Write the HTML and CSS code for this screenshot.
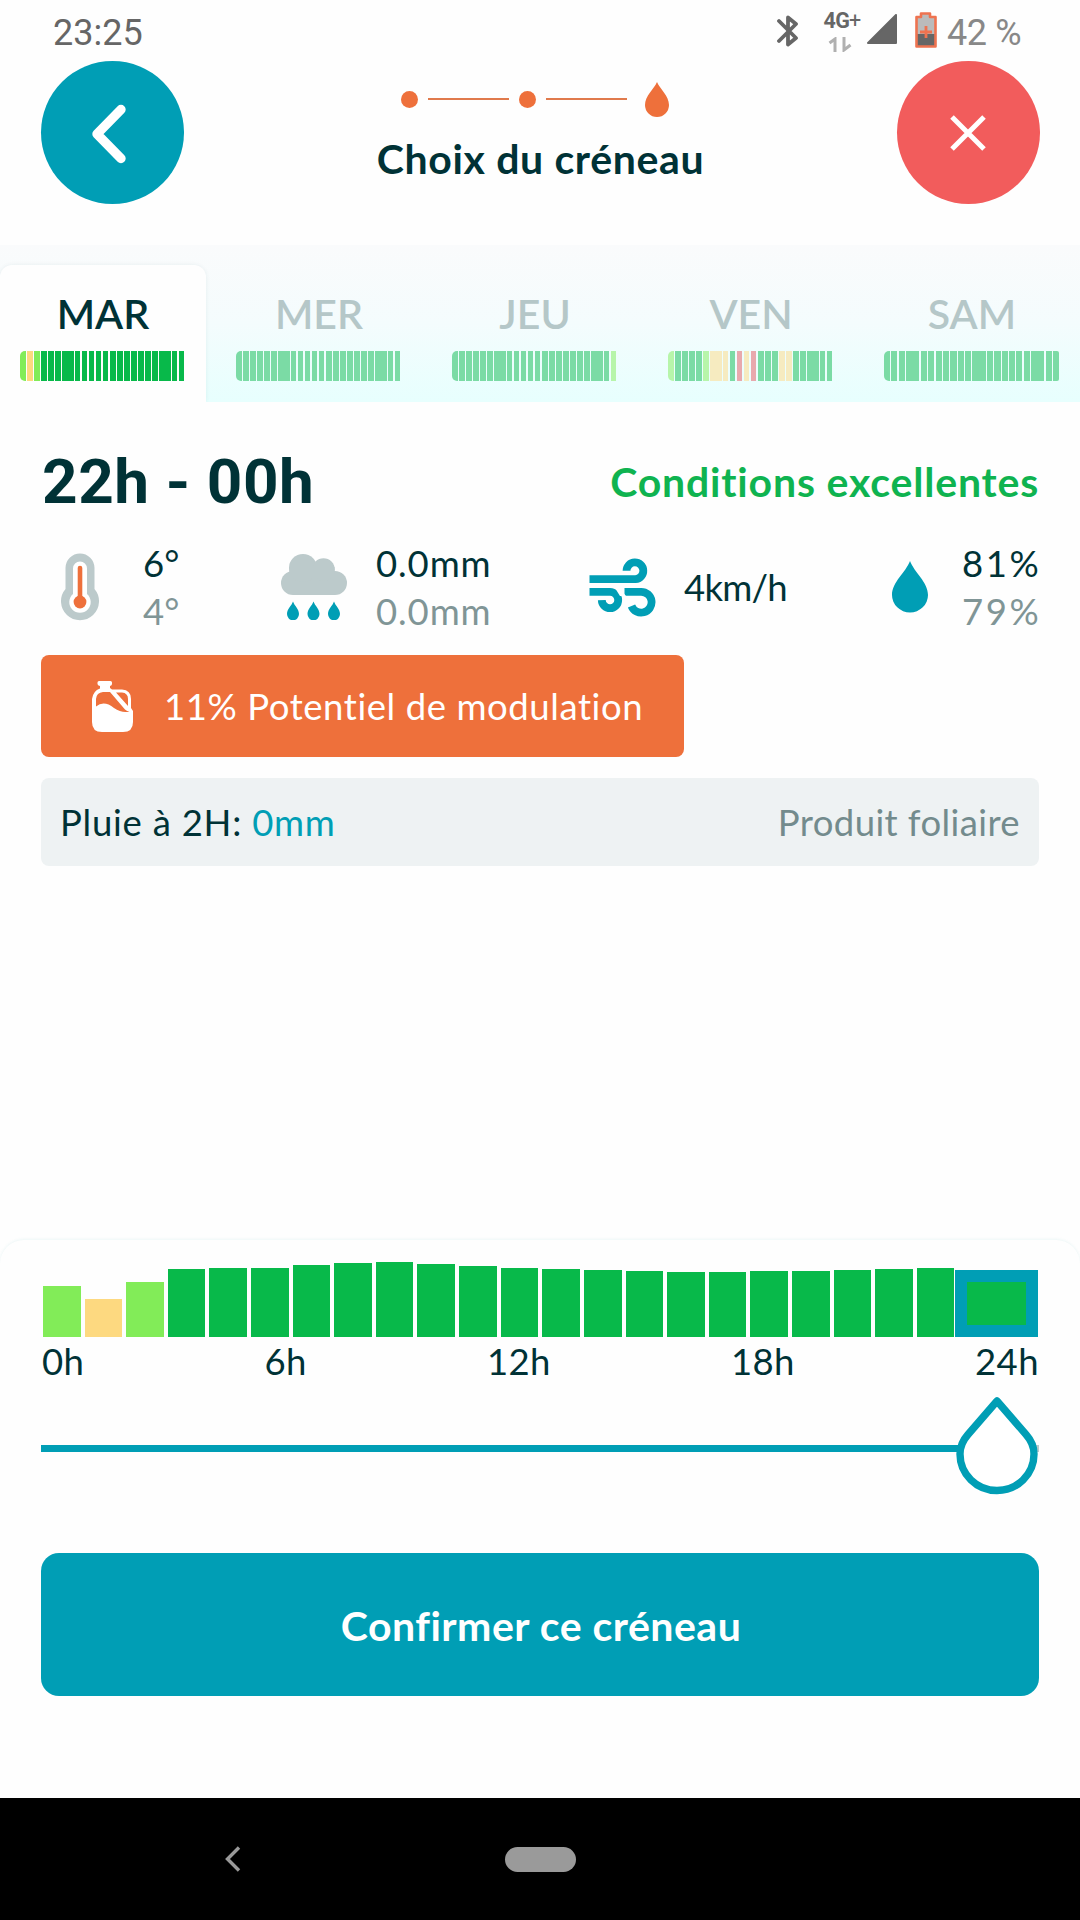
FILE: index.html
```html
<!DOCTYPE html>
<html lang="fr">
<head>
<meta charset="utf-8">
<title>Choix du créneau</title>
<link rel="stylesheet" href="styles.css">
</head>
<body>
<div class="status">
  <span class="clock">23:25</span>
  <span class="status-icons">
    <svg class="bt" width="22" height="34" viewBox="0 0 22 34"><path d="M2 7 19 24 11 30.500V3.500L19 10 2 27" fill="none" stroke="#666" stroke-width="3.800" stroke-linejoin="round" stroke-linecap="round"/></svg>
    <span class="net">
      <span class="gen">4G<i>+</i></span>
      <svg width="24" height="15" viewBox="0 0 24 15"><path d="M1.500 6 7 2V15M16 0V13L22.500 8" fill="none" stroke="#b0b0b0" stroke-width="3"/></svg>
    </span>
    <svg class="signal" width="30" height="30" viewBox="0 0 30 30"><path d="M29 1V29H1Z" fill="#666" stroke="#666" stroke-width="2" stroke-linejoin="round"/></svg>
    <svg class="battery" width="22" height="36" viewBox="0 0 22 36"><path d="M6 1.500H15V5H20.500V34.500H1.500V5H6Z" fill="#bbb"/><path d="M2 22H20V34H2Z" fill="#666"/><path d="M6 1.500H15V5H20.500V34.500H1.500V5H6Z" fill="none" stroke="#ee7350" stroke-width="2.600" stroke-linejoin="round"/><path d="M11 14V26M5 20H17" stroke="#ee7350" stroke-width="2.800"/></svg>
    <span class="percent">42 %</span>
  </span>
</div>

<header class="header">
  <button class="round back" aria-label="Retour"><svg width="36" height="60" viewBox="0 0 36 60"><path d="M30 5.500 6 30 30 54.500" fill="none" stroke="#fff" stroke-width="9.400" stroke-linejoin="round" stroke-linecap="round"/></svg></button>
  <div class="heading">
    <div class="steps">
      <span class="dot"></span><span class="line"></span><span class="dot"></span><span class="line"></span>
      <svg width="24" height="35" viewBox="0 0 24 35"><path d="M12 0C15 7 24 14 24 23A12 12 0 0 1 0 23C0 14 9 7 12 0Z" fill="#ee703b"/></svg>
    </div>
    <h1>Choix du créneau</h1>
  </div>
  <button class="round close" aria-label="Fermer"><svg width="36" height="36" viewBox="0 0 36 36"><path d="M2 2 34 34M34 2 2 34" stroke="#fff" stroke-width="5"/></svg></button>
</header>

<nav class="days">
  <div class="day active"><span>MAR</span><div class="spark" data-hours="lylggggggggggggggggggggg"></div></div>
  <div class="day"><span>MER</span><div class="spark" data-hours="gggggggggggggggggggggggg"></div></div>
  <div class="day"><span>JEU</span><div class="spark" data-hours="gggggggggggggggggggggggl"></div></div>
  <div class="day"><span>VEN</span><div class="spark" data-hours="lgggglyyygryrgggyygggggg"></div></div>
  <div class="day last"><span>SAM</span><div class="spark" data-hours="gggggggggggggggggggggggg"></div></div>
</nav>

<main class="details">
  <div class="title-row">
    <h2>22h - 00h</h2>
    <strong>Conditions excellentes</strong>
  </div>
  <div class="metrics">
    <svg class="thermo" width="38" height="68" viewBox="0 0 38 68"><path d="M4.500 15A14.500 14.500 0 0 1 33.500 15V36A19 19 0 1 1 4.500 36Z" fill="#bccacb"/><path d="M12 15.500A7 7 0 0 1 26 15.500V41A10.700 10.700 0 1 1 12 41Z" fill="#fff"/><path d="M19 15V49" stroke="#ee703b" stroke-width="4.600" stroke-linecap="round"/><circle cx="19" cy="49" r="6.400" fill="#ee703b"/></svg>
    <div class="values"><span>6°</span><span class="low">4°</span></div>
    <svg width="66" height="66" viewBox="0 0 66 66"><g fill="#bccacb"><rect y="17" width="66" height="24" rx="12"/><circle cx="22" cy="14" r="14"/><circle cx="42.500" cy="15.500" r="11.300"/><path d="M8.500 13H53.500V24H8.500Z"/></g><g fill="#009eb5"><path d="M12 47.500C13.500 52 18 55 18 60A6 6.300 0 0 1 6 60C6 55 10.500 52 12 47.500Z"/><path d="M32.500 47.500C34 52 38.500 55 38.500 60A6 6.300 0 0 1 26.500 60C26.500 55 31 52 32.500 47.500Z"/><path d="M53 47.500C54.500 52 59 55 59 60A6 6.300 0 0 1 47 60C47 55 51.500 52 53 47.500Z"/></g></svg>
    <div class="values wide"><span>0.0mm</span><span class="low">0.0mm</span></div>
    <svg width="67" height="59" viewBox="0 0 67 59"><g fill="none" stroke="#009eb5" stroke-width="7.800"><path d="M.5 21.200H46.500A8.400 8.400 0 1 0 37.500 12.800"/><path d="M.5 33.800H21A8.200 8.200 0 1 1 12.800 42.200"/><path d="M35.500 33.800H52A10.400 10.400 0 1 1 42.500 48"/></g><path d="M30 28V29.500L37 38H31L26 30Z" fill="#fff"/></svg>
    <div class="values wind"><span>4km/h</span></div>
    <svg width="36" height="52" viewBox="0 0 36 52"><path d="M18 0C22 11 36 21 36 34A18 17.500 0 0 1 0 34C0 21 14 11 18 0Z" fill="#009eb5"/></svg>
    <div class="values humid"><span>81%</span><span class="low">79%</span></div>
  </div>
  <div class="potential">
    <svg width="41" height="51" viewBox="0 0 41 51"><path d="M7 0H18.500Q20 0 20 1.500V3Q20 4.500 18 5V7L20 8.500H30Q39 9 39 18V27L41 30V41Q41 51 31 51H10Q0 51 0 41V18Q1 10 8 7.500V5Q5.500 4.500 5.500 3V1.500Q5.500 0 7 0Z" fill="#fff"/><path d="M4 25.500V18Q4.500 11.500 11 11H18L33 28.500Q35 30.500 37.500 30.500Q30 32.500 22 27Q12 19 4 25.500ZM24 11.500H30Q36 12 36 18V25Z" fill="#ee703b"/></svg>
    <span>11% Potentiel de modulation</span>
  </div>
  <div class="rain">
    <span>Pluie à 2H: <b>0mm</b></span>
    <span class="product">Produit foliaire</span>
  </div>
</main>

<section class="picker">
  <div class="chart" id="chart"></div>
  <div class="hours"><span>0h</span><span>6h</span><span>12h</span><span>18h</span><span>24h</span></div>
  <div class="slider">
    <div class="track"></div>
    <svg class="thumb" width="82" height="98" viewBox="0 0 82 98"><path d="M41 4 12 37.500Q4 46.500 4 57A37 36.500 0 0 0 78 57Q78 46.500 70 37.500Z" fill="#fff" stroke="#009eb5" stroke-width="7.400" stroke-linejoin="round"/></svg>
  </div>
  <button class="confirm">Confirmer ce créneau</button>
</section>

<footer class="navbar">
  <svg width="16" height="26" viewBox="0 0 16 26"><path d="M14 1.500 2.500 13 14 24.500" fill="none" stroke="#9a9a9a" stroke-width="3.400"/></svg>
  <span class="pill"></span>
</footer>
<script src="bars.js"></script>
</body>
</html>
```
FILE: styles.css
```css
* { box-sizing: border-box; }
body {
  margin: 0;
  width: 1080px;
  height: 1920px;
  overflow: hidden;
  display: flex;
  flex-direction: column;
  background: #fefefe;
  color: #003236;
  font: 400 36.5px/48px Lato, "Open Sans", sans-serif;
  white-space: nowrap;
}
svg { display: block; flex: none; }
h1, h2 { margin: 0; }
button { border: 0; padding: 0; margin: 0; font: inherit; color: #fff; }

.status {
  height: 61px;
  flex: none;
  display: flex;
  justify-content: space-between;
  align-items: flex-start;
  padding: 11px 59px 0 53px;
  font: 400 36px/45px Roboto, sans-serif;
  color: #666;
}
.status-icons { display: flex; align-items: flex-start; }
.bt { margin: 3px 24px 0 0; }
.net { display: flex; flex-direction: column; align-items: center; width: 38px; margin: -1px 6px 0 0; }
.gen { font: 700 21.500px/22px Roboto, sans-serif; letter-spacing: -.8px; }
.gen i { font-style: normal; font-weight: 400; }
.net svg { margin: 5px 4px 0 0; }
.signal { margin: 3px 18px 0 0; }
.battery { margin: 1px 10px 0 0; }
.percent { color: #888; width: 74px; letter-spacing: -.4px; }

.header {
  height: 184px;
  flex: none;
  display: flex;
  justify-content: space-between;
  padding: 0 40px 0 41px;
}
.round {
  width: 143px;
  height: 143px;
  border-radius: 50%;
  display: flex;
  align-items: center;
  justify-content: center;
}
.back { background: #009eb5; padding: 2px 7px 0 0; }
.close { background: #f25c5c; padding-right: 1px; }
.heading { display: flex; flex-direction: column; align-items: center; padding-top: 19px; }
.steps { display: flex; align-items: center; height: 38px; width: 279px; gap: 10px; }
.dot { width: 17px; height: 17px; border-radius: 50%; background: #ee703b; }
.line { width: 81px; height: 2px; background: #e07a4c; }
.steps svg { margin-left: 8px; }
.heading h1 { margin-top: 17px; font-size: 41px; font-weight: 700; letter-spacing: .65px; }

.days {
  height: 157px;
  flex: none;
  display: grid;
  grid-template-columns: repeat(5, 216px);
  background: linear-gradient(#fafbfc, #f4fcfd 50%, #e7fffe);
}
.day {
  margin: 20px 10px 0 0;
  padding: 25px 0 20px 20px;
  width: 206px;
  display: flex;
  flex-direction: column;
  gap: 13px;
  font-size: 41px;
  font-weight: 600;
  color: #b5c7c8;
}
.day span { width: 166px; text-align: center; }
.day.last span { width: 176px; }
.day.active {
  color: #003236;
  background: #fefefe;
  border-radius: 12px 12px 0 0;
  box-shadow: 0 0 4px rgba(0, 80, 90, .08);
  clip-path: inset(-6px -6px 0 0);
}
.spark { width: 164px; height: 30px; border-radius: 5px 0 0 5px; overflow: hidden; }
.day.last .spark { width: 175px; border-radius: 5px 2px 2px 5px; }

.details { flex: 1; display: flex; flex-direction: column; padding: 49px 41px 0; }
.title-row { display: flex; justify-content: space-between; align-items: center; height: 62px; }
.title-row h2 { font: 700 62px/60px Roboto, sans-serif; letter-spacing: .6px; margin-left: 1px; }
.title-row strong { font-size: 41px; font-weight: 700; letter-spacing: .82px; color: #0fb350; }
.metrics {
  display: grid;
  grid-template-columns: 82px 138px 95px 213px 95px 208px 70px 80px;
  align-items: center;
  height: 96px;
  margin: 26px 0 20px 20px;
}
.values { display: flex; flex-direction: column; }
.wide { letter-spacing: .9px; }
.wind { letter-spacing: -.75px; }
.humid { letter-spacing: 2.6px; }
.low { color: #809596; }
.thermo { margin-bottom: 1px; }
.potential {
  width: 643px;
  height: 102px;
  display: flex;
  align-items: center;
  padding-left: 51px;
  gap: 31px;
  border-radius: 8px;
  background: #ee703b;
  color: #fff;
  letter-spacing: .57px;
}
.rain {
  height: 88px;
  margin-top: 21px;
  padding: 0 19px;
  display: flex;
  align-items: center;
  justify-content: space-between;
  border-radius: 8px;
  background: #eef2f3;
  letter-spacing: .75px;
}
.rain b { font-weight: 400; color: #009eb5; }
.product { color: #738b8d; letter-spacing: .4px; }

.picker {
  height: 558px;
  flex: none;
  padding: 19px 41px 0;
  border-radius: 24px 24px 0 0;
  background: #fefefe;
  box-shadow: 0 -1px 3px rgba(0, 150, 150, .07);
}
.chart { display: flex; align-items: flex-end; gap: 4px; height: 78px; padding: 0 0 0 2px; }
.bar { width: 37.620px; flex: none; background: #08b94a; }
.bar.l { background: #82ec58; }
.bar.y { background: #fdd980; }
.bar.selected { width: 83px; margin-left: -3px; border: 12px solid #009eb5; }
.hours { display: flex; justify-content: space-between; height: 46px; line-height: 48px; letter-spacing: .4px; padding-left: 1px; }
.slider { position: relative; height: 170px; padding-top: 62px; }
.track { height: 7px; background: linear-gradient(90deg, #009eb5 960px, #bccacb 960px); }
.thumb { position: absolute; right: 1px; top: 14px; }
.confirm {
  display: block;
  width: 998px;
  height: 143px;
  border-radius: 18px;
  background: #009eb5;
  font-size: 41px;
  font-weight: 700;
  letter-spacing: .5px;
  padding: 2px 0 0 2px;
}
.navbar { height: 122px; flex: none; background: #000; display: flex; align-items: center; padding-left: 225px; }
.pill { width: 71px; height: 25px; border-radius: 13px; background: #9a9a9a; margin-left: 264px; }
```
FILE: bars.js
```
const vivid = { g: '#08b94a', l: '#82ec58', y: '#fdd980', r: '#e35d6a' };
const pale = { g: '#7bdba5', l: '#b7f5aa', y: '#f6ebc0', r: '#e8a9ad' };

// [start, width] of each hour in the day strips
const narrow = [[0, 6], [7, 6], [14, 6], [21, 6], [28, 6], [35, 6], [42, 6], [48, 6], [55, 5], [62, 5], [69, 5], [76, 5], [83, 5], [90, 6], [97, 6], [104, 6], [111, 6], [118, 6], [125, 6], [132, 6], [139, 6], [145, 6], [152, 5], [159, 5]];
const broad = [[0, 6], [7, 6], [15, 6], [22, 7], [29, 6], [37, 6], [44, 6], [52, 6], [59, 6], [66, 7], [74, 6], [81, 6], [88, 7], [95, 7], [103, 6], [110, 7], [118, 6], [125, 6], [132, 6], [140, 6], [147, 7], [154, 6], [162, 6], [169, 6]];

document.querySelectorAll('.spark').forEach(el => {
  const day = el.parentElement.classList;
  const colors = day.contains('active') ? vivid : pale;
  const slots = day.contains('last') ? broad : narrow;
  const rects = slots.map(([x, w], i) =>
    `<rect x="${x}" width="${w}" height="30" fill="${colors[el.dataset.hours[i]]}"/>`).join('');
  el.innerHTML = `<svg width="175" height="30" shape-rendering="crispEdges">${rects}</svg>`;
});

const heights = [51, 38, 55, 68, 69, 69, 72, 74, 75, 73, 71, 69, 68, 67, 66, 65, 65, 66, 66, 67, 68, 69];
const kinds = { 0: 'l', 1: 'y', 2: 'l' };
document.getElementById('chart').innerHTML =
  heights.map((h, i) => `<div class="bar ${kinds[i] || ''}" style="height:${h}px"></div>`).join('') +
  '<div class="bar selected" style="height:67px"></div>';
```
